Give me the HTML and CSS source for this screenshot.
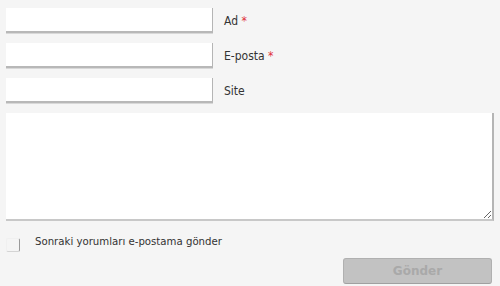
FILE: index.html
```html
<!DOCTYPE html>
<html lang="tr">
<head>
  <meta charset="UTF-8" />
  <title>Yorum yap</title>
  <link rel="stylesheet" href="styles.css">
</head>
<body>
  <form class="comment-form">
    <div class="field">
      <input type="text" class="text-input">
      <label>Ad <span class="req">*</span></label>
    </div>
    <div class="field">
      <input type="text" class="text-input">
      <label>E-posta <span class="req">*</span></label>
    </div>
    <div class="field">
      <input type="text" class="text-input">
      <label>Site</label>
    </div>
    <textarea class="comment-box"></textarea>
    <div class="notify">
      <span class="check"></span>
      <span class="notify-text">Sonraki yorumları e-postama gönder</span>
    </div>
    <div class="actions">
      <button type="button" class="submit-btn" disabled>Gönder</button>
    </div>
  </form>
</body>
</html>
```

FILE: styles.css
```css
* { margin: 0; padding: 0; box-sizing: border-box; }
body {
  background: #f5f5f5;
  font-family: 'DejaVu Sans Condensed', 'DejaVu Sans', Verdana, sans-serif;
  font-size: 12px;
  color: #333;
}
.comment-form {
  padding: 8px 6px 0 6px;
  display: flex;
  flex-direction: column;
}
.field {
  display: flex;
  align-items: center;
  gap: 11px;
  margin-bottom: 10px;
}
.text-input {
  width: 207px;
  height: 25px;
  background: #fff;
  border: none;
  border-right: 1px solid #b5b5b5;
  border-bottom: 2px solid #b8b8b8;
  box-shadow: 0 1px 0 #d8d8d8;
  outline: none;
}
.field label {
  color: #333;
}
.req {
  color: #e0303a;
}
.comment-box {
  width: 488px;
  height: 108px;
  background: #fff;
  border: none;
  border-right: 2px solid #b5b5b5;
  border-bottom: 2px solid #c8c8c8;
  resize: vertical;
  outline: none;
}
.notify {
  display: flex;
  align-items: flex-start;
  gap: 15px;
  margin-top: 17px;
  height: 14px;
}
.notify-text {
  margin-top: -3px;
  font-size: 11.3px;
}
.check {
  width: 14px;
  height: 14px;
  border: 1px solid #f0f0f0;
  border-right-color: #9a9a9a;
  border-bottom-color: #d4d4d4;
  border-radius: 2px;
}
.actions {
  display: flex;
  justify-content: flex-end;
  padding-right: 2px;
  margin-top: 6px;
}
.submit-btn {
  width: 149px;
  height: 26px;
  background: #c2c2c2;
  border: 1px solid #b0b0b0;
  border-bottom-color: #a0a0a0;
  border-radius: 3px;
  color: #a9a9a9;
  font-family: 'DejaVu Sans', Verdana, sans-serif;
  font-size: 12px;
  font-weight: bold;
}
```
